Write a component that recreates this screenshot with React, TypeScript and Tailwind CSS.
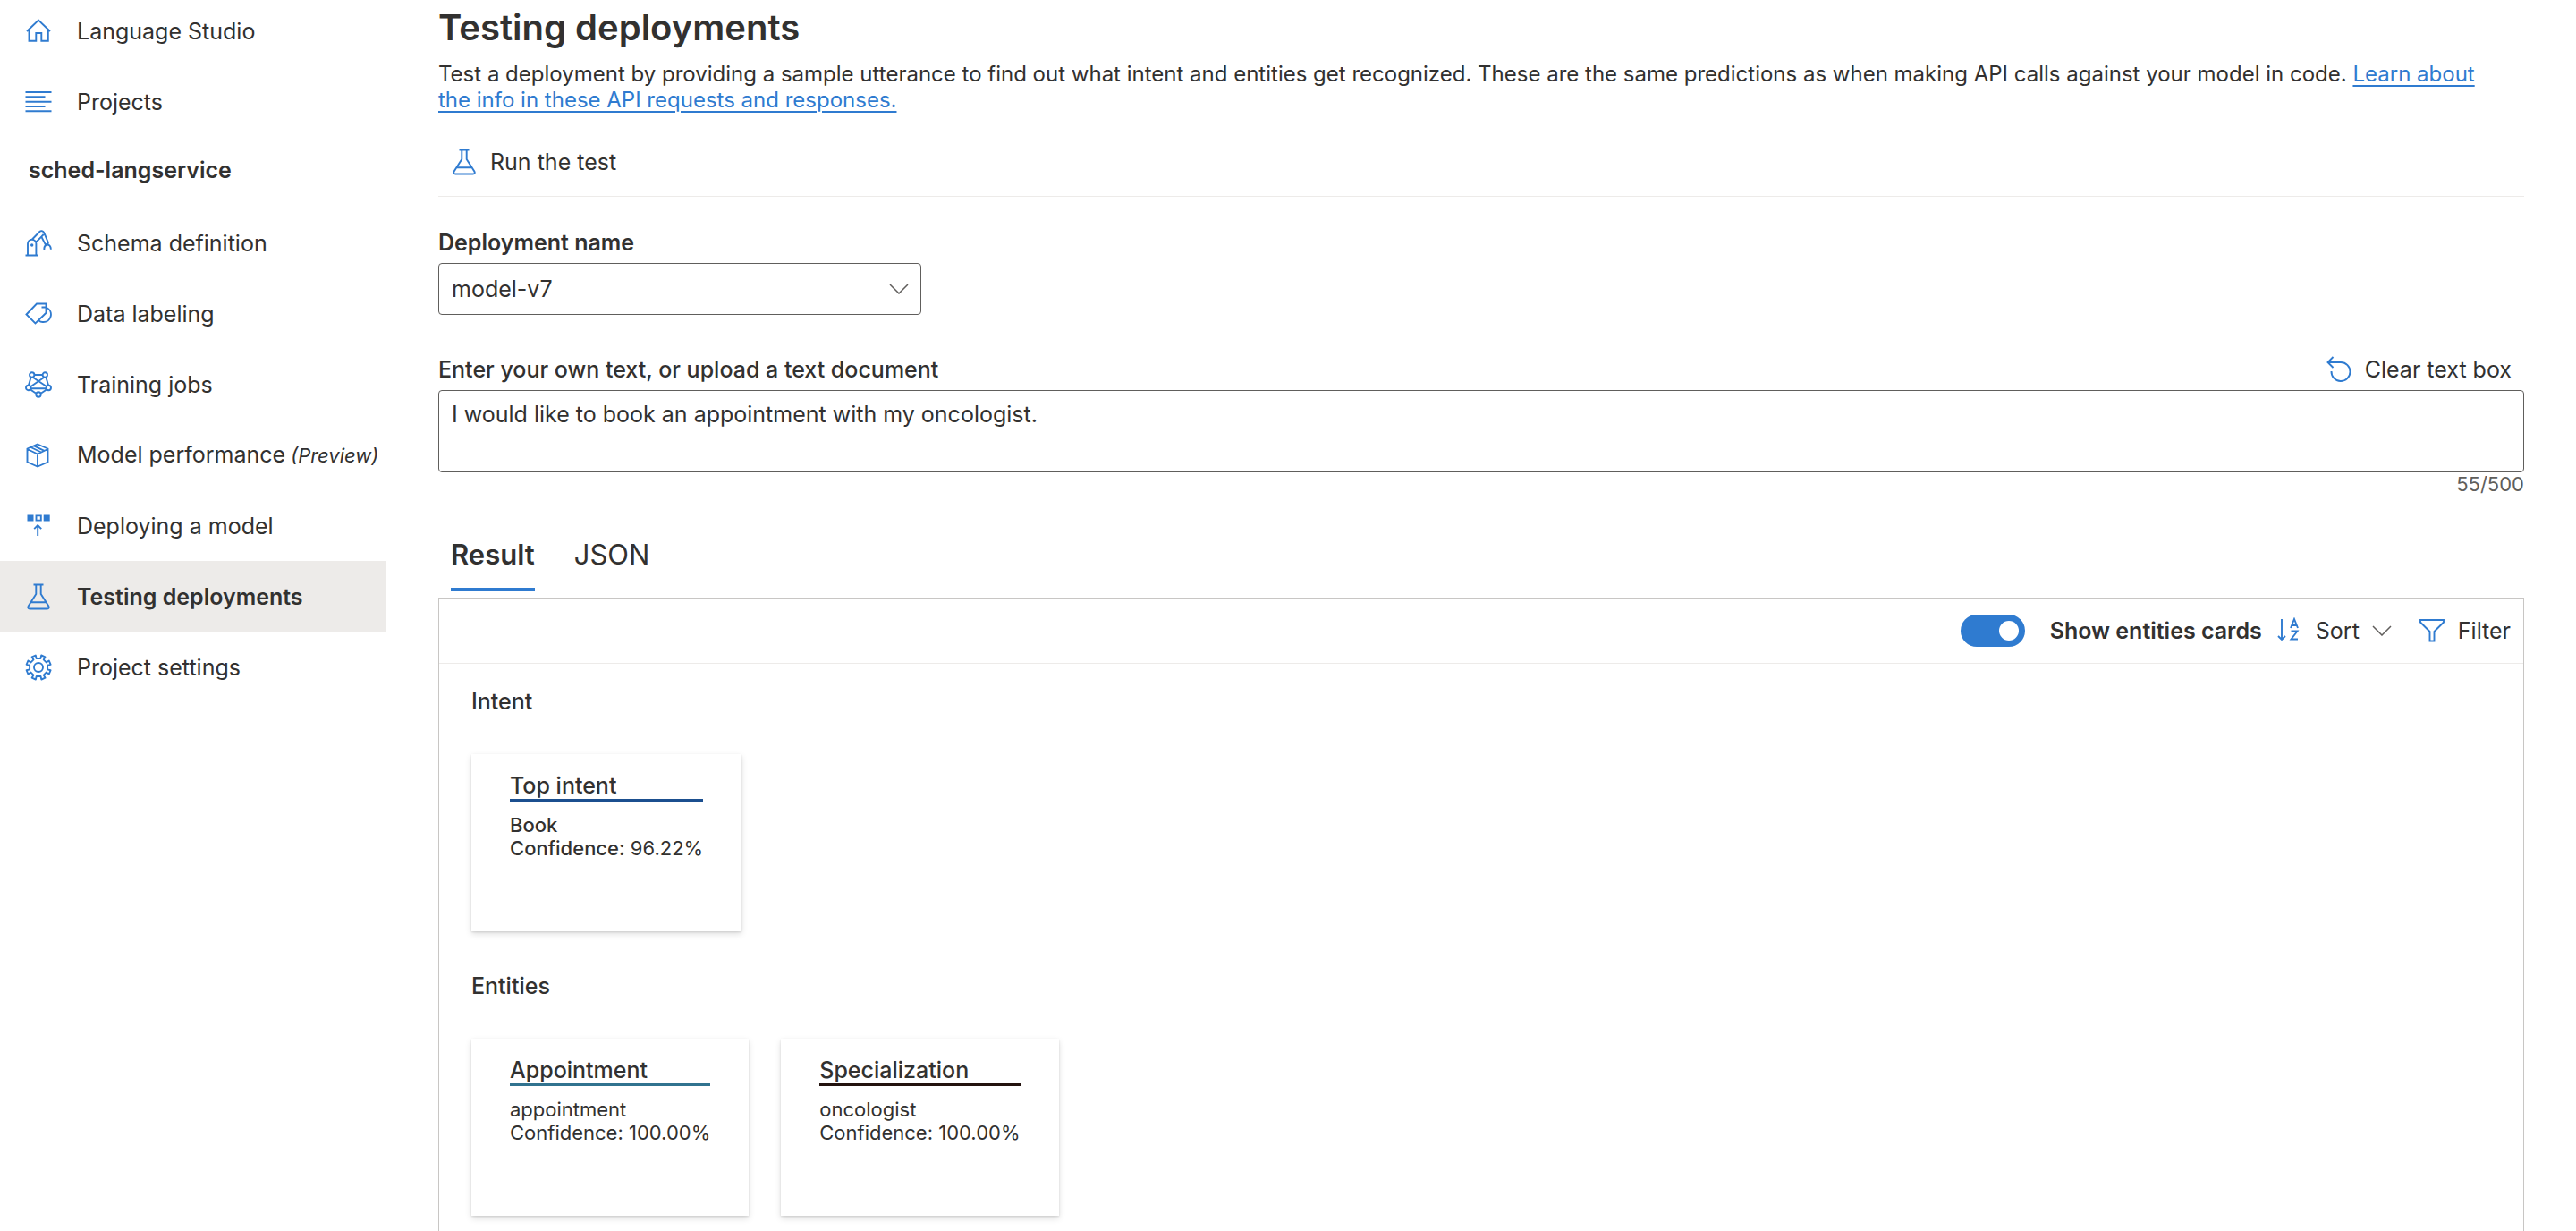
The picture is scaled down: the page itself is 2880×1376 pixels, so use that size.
import { useState } from "react";
import type { ReactNode } from "react";

const BLUE = "#2f7bd0";

function Svg({ children }: { children: ReactNode }) {
  return (
    <svg width="30" height="30" viewBox="0 0 30 30" fill="none" stroke={BLUE} strokeWidth="1.9" aria-hidden="true" className="shrink-0">
      {children}
    </svg>
  );
}

const HomeIcon = () => (
  <Svg>
    <path d="M2 15 15 2.500 28 15M4.500 13v12.800h7.800V17h6v8.800h7.500V13" />
  </Svg>
);
const ProjectsIcon = () => (
  <Svg>
    <path d="M.5 4h29M.5 9.300h22M.5 14.700h29M.5 20h22M.5 25.300h29" />
  </Svg>
);
const RobotIcon = () => (
  <Svg>
    <path d="M.5 28.500h14M3 28V15.500a4.700 4.700 0 0 1 9.400 0V28M7.500 11 16.300 2a3 3 0 0 1 4.700.700l5.200 12.100M12 14l6.300-6.400 4.600 9M18.300 7.600l2.400-2.600M22.900 16.600l3.300-1.800M21.500 22.500c-.500-3 .700-5.300 2.900-5.900 2.500-.300 4.400 1.600 4.500 5.100" />
    <circle cx="7.700" cy="17" r="1.700" fill={BLUE} stroke="none" />
  </Svg>
);
const TagIcon = () => (
  <Svg>
    <path d="M1.500 15.500 13 3.500h10.500v10.300L11.500 25.500ZM18.500 7.500h5C33 12 29 25 19.500 24c-1.500 0-3-.600-4-1.500" />
  </Svg>
);
const NetworkIcon = () => (
  <Svg>
    <path d="M10.500 4h9M6.500 7 4 15.500M23.500 7l2.500 8.500M9 7l15 10M21 7 6.500 17M7 19.300h16M6 20.500l6 4M24 20.500l-6 4" />
    <circle cx="7.700" cy="4" r="2.700" />
    <circle cx="22.300" cy="4" r="2.700" />
    <circle cx="3.700" cy="18.500" r="2.700" />
    <circle cx="26.300" cy="18.500" r="2.700" />
    <circle cx="15" cy="26" r="2.700" />
  </Svg>
);
const BoxIcon = () => (
  <Svg>
    <path d="M14 2.500 25.500 7.500v15L14 27.500 2.500 22.500v-15ZM2.500 8 14 13.500 25.500 8M14 13.500v14M6.500 6 18 11.500M10 4.300l11.500 5.500" />
  </Svg>
);
const DeployIcon = () => (
  <Svg>
    <path d="M2.500 2.500h7v7h-7ZM20.700 2.500h7v7h-7Z" fill={BLUE} stroke="none" />
    <path d="M12.500 3.400h5.300v5.200h-5.300ZM14.200 26V14.200M10.200 18.200l4-4 4 4" />
  </Svg>
);
const FlaskIcon = () => (
  <Svg>
    <path d="M9.500 1.500h11M12.300 1.500V12L3.700 25.500c-1 1.800-.3 3 1.500 3h19.600c1.800 0 2.500-1.200 1.500-3L17.700 12V1.500M6.500 21.300h17" />
  </Svg>
);
const GearIcon = () => (
  <Svg>
    <circle cx="15" cy="15" r="5" />
    <path d="M11.800 1.500 12.600 5h4.800l.8-3.500 4.300 1.800L20.700 6.400l3 3 3.100-1.900 1.800 4.300-3.500.8v4.800l3.500.8-1.800 4.300-3.100-1.900-3 3 1.900 3.100-4.300 1.800-.8-3.500h-4.800l-.8 3.500-4.300-1.800 1.900-3.100-3-3-3.100 1.900-1.800-4.300 3.500-.8v-4.800l-3.500-.8 1.800-4.300 3.100 1.900 3-3-1.900-3.100Z" strokeLinejoin="round" />
  </Svg>
);
const UndoIcon = () => (
  <Svg>
    <path d="M8.500 1 2.500 7l6 6M2.500 7H17a10.500 10.500 0 1 1-10.500 10" />
  </Svg>
);
const SortIcon = () => (
  <Svg>
    <path d="M6 2v23M2 21l4 4 4-4M16 12l4-10 4 10M17.500 9h5M16.500 15.500h7l-7 9h7.500" />
  </Svg>
);
const FilterIcon = () => (
  <Svg>
    <path d="M2 3h26v2.500L17.500 16v10.500h-5V16L2 5.500Z" />
  </Svg>
);
const ChevronDown = () => (
  <svg width="22" height="12" viewBox="0 0 22 12" fill="none" stroke="#605e5c" strokeWidth="1.500" aria-hidden="true">
    <path d="M1 1l10 10L21 1" />
  </svg>
);

function NavItem({ icon, label, note, active = false }: { icon: ReactNode; label: string; note?: string; active?: boolean }) {
  return (
    <a
      href="#"
      aria-current={active ? "page" : undefined}
      className={`flex h-[79px] items-center gap-7 pl-7 whitespace-nowrap ${active ? "bg-[#edebe9] font-semibold" : ""}`}
    >
      {icon}
      <span>
        {label}
        {note && <em className="ml-1.5 text-[22px]">{note}</em>}
      </span>
    </a>
  );
}

function ResultCard({ title, line, value, confidence, strong = false }: { title: string; line: string; value: string; confidence: string; strong?: boolean }) {
  return (
    <article className="h-[198px] px-[43px] pt-5 shadow-[0_3px_7px_rgba(0,0,0,0.13),0_1px_2px_rgba(0,0,0,0.11)]">
      <h3 className={`border-b-[3px] leading-[30px] font-medium ${line}`}>{title}</h3>
      <div className="mt-[13px] text-[22px] leading-[26px]">
        <p className={strong ? "font-medium" : ""}>{value}</p>
        <p>
          <span className={strong ? "font-medium" : ""}>Confidence:</span> {confidence}
        </p>
      </div>
    </article>
  );
}

export default function App() {
  const [text, setText] = useState("I would like to book an appointment with my oncologist.");
  const [showCards, setShowCards] = useState(true);

  return (
    <div className="flex h-screen overflow-hidden bg-white font-['Inter',sans-serif] text-[25px] leading-[30px] text-[#323130]">
      <nav className="-mt-[5px] w-[432px] shrink-0 border-r border-[#e1dfdd]">
        <NavItem icon={<HomeIcon />} label="Language Studio" />
        <NavItem icon={<ProjectsIcon />} label="Projects" />
        <h2 className="flex h-[79px] items-center pb-1.5 pl-8 font-semibold">sched-langservice</h2>
        <NavItem icon={<RobotIcon />} label="Schema definition" />
        <NavItem icon={<TagIcon />} label="Data labeling" />
        <NavItem icon={<NetworkIcon />} label="Training jobs" />
        <NavItem icon={<BoxIcon />} label="Model performance" note="(Preview)" />
        <NavItem icon={<DeployIcon />} label="Deploying a model" />
        <NavItem icon={<FlaskIcon />} label="Testing deployments" active />
        <NavItem icon={<GearIcon />} label="Project settings" />
      </nav>

      <main className="min-w-0 grow px-[58px] pt-1">
        <h1 className="text-[40px] leading-[54px] font-semibold">Testing deployments</h1>
        <p className="mt-2.5 pr-8 text-2xl leading-[29px]">
          Test a deployment by providing a sample utterance to find out what intent and entities get recognized. These are the same predictions as when making API calls against your model in code.{" "}
          <a href="#" className="text-[#2f7bd0] underline decoration-2 underline-offset-4">
            Learn about the info in these API requests and responses.
          </a>
        </p>

        <div className="flex h-[94px] items-center border-b border-[#edebe9] px-[14px] pt-4">
          <button type="button" className="flex items-center gap-[14px]">
            <FlaskIcon />
            Run the test
          </button>
        </div>

        <div className="mt-9">
          <label htmlFor="deployment" className="block font-semibold">
            Deployment name
          </label>
          <div className="relative mt-2 w-[540px]">
            <select id="deployment" defaultValue="model-v7" className="block h-[58px] w-full appearance-none rounded-[4px] border border-[#605e5c] bg-white px-[14px]">
              <option>model-v7</option>
            </select>
            <span className="pointer-events-none absolute inset-y-0 right-[14px] flex items-center">
              <ChevronDown />
            </span>
          </div>
        </div>

        <div className="mt-[46px]">
          <div className="flex items-center justify-between pr-[14px]">
            <label htmlFor="utterance" className="font-medium">
              Enter your own text, or upload a text document
            </label>
            <button type="button" onClick={() => setText("")} className="flex items-center gap-[14px]">
              <UndoIcon />
              Clear text box
            </button>
          </div>
          <textarea
            id="utterance"
            value={text}
            onChange={(e) => setText(e.target.value)}
            className="mt-2 block h-[92px] w-full resize-none rounded-[4px] border border-[#605e5c] px-[14px] py-[11px]"
          />
          <p className="text-right text-[22px] leading-[26px] text-[#605e5c]">{text.length}/500</p>
        </div>

        <div role="tablist" className="mt-9 flex gap-11 px-[14px] text-[31px]">
          <button type="button" role="tab" aria-selected="true" className="h-[71px] border-b-4 border-[#2f7bd0] pb-2 font-semibold">
            Result
          </button>
          <button type="button" role="tab" aria-selected="false" className="h-[71px] border-b-4 border-transparent pb-2">
            JSON
          </button>
        </div>

        <section className="mt-[7px] border border-[#c8c6c4]">
          <div className="flex h-[73px] items-center justify-end border-b border-[#edebe9] pr-[14px]">
            <label className="flex cursor-pointer items-center gap-7 font-semibold">
              <input type="checkbox" role="switch" checked={showCards} onChange={(e) => setShowCards(e.target.checked)} className="peer sr-only" />
              <span className="flex h-9 w-[72px] items-center rounded-full bg-[#8a8886] px-[7px] peer-checked:justify-end peer-checked:bg-[#2f7bd0]">
                <span className="size-[22px] rounded-full bg-white" />
              </span>
              Show entities cards
            </label>
            <button type="button" className="ml-4 flex items-center gap-[14px]">
              <SortIcon />
              Sort
              <ChevronDown />
            </button>
            <button type="button" className="ml-[30px] flex items-center gap-[14px]">
              <FilterIcon />
              Filter
            </button>
          </div>
          <div className="px-9 pt-[27px] pb-9">
            <h2 className="font-medium">Intent</h2>
            <div className="mt-11 flex gap-9">
              <ResultCard title="Top intent" line="border-[#1b4f8f]" value="Book" confidence="96.22%" strong />
            </div>
            <h2 className="mt-[46px] font-medium">Entities</h2>
            {showCards && (
              <div className="mt-11 flex gap-9">
                <ResultCard title="Appointment" line="border-[#31738f]" value="appointment" confidence="100.00%" />
                <ResultCard title="Specialization" line="border-[#23130f]" value="oncologist" confidence="100.00%" />
              </div>
            )}
          </div>
        </section>
      </main>
    </div>
  );
}
